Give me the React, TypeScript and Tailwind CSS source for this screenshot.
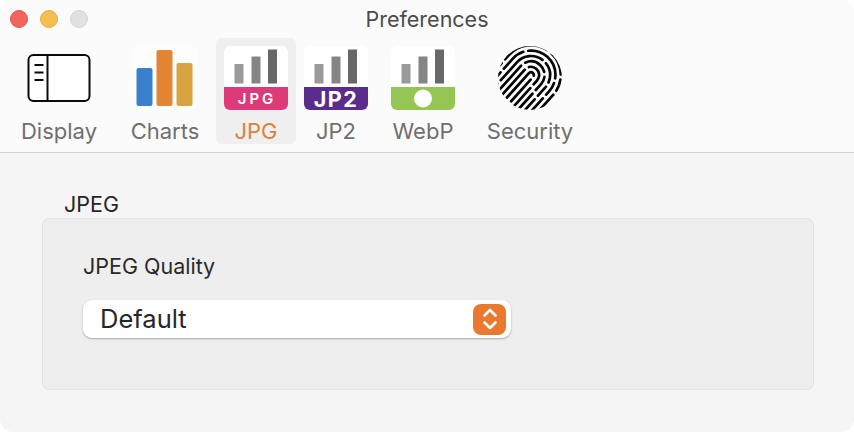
import React from "react";

const font = { fontFamily: "Inter, 'Liberation Sans', sans-serif" };

function Bars() {
  return (
    <>
      <rect x="10.5" y="18" width="9" height="19.5" fill="#9a9a9a" />
      <rect x="27.5" y="10.5" width="9" height="27" fill="#858585" />
      <rect x="44" y="3.5" width="9" height="34" fill="#686868" />
    </>
  );
}

function BarTile({ color, children }: { color: string; children?: React.ReactNode }) {
  return (
    <svg width="64" height="64" viewBox="0 0 64 64" className="block">
      <rect width="64" height="64" rx="6" fill="#ffffff" />
      <Bars />
      <path d="M0 41h64v17a6 6 0 0 1-6 6H6a6 6 0 0 1-6-6z" fill={color} />
      {children}
    </svg>
  );
}

function DisplayIcon() {
  return (
    <svg width="64" height="64" viewBox="0 0 64 64" className="block">
      <rect x="1.5" y="9" width="61" height="46" rx="5" fill="#fff" stroke="#0a0a0a" strokeWidth="2" />
      <path d="M20.5 9v46M7.5 19h9M7.5 26.5h9M7.5 34h9" stroke="#0a0a0a" strokeWidth="2" fill="none" />
    </svg>
  );
}

function ChartsIcon() {
  return (
    <svg width="66" height="66" viewBox="0 0 66 66" className="block">
      <rect width="66" height="66" rx="8" fill="#fdfdfd" />
      <rect x="4.5" y="23" width="16" height="38" rx="2" fill="#3a80cc" />
      <rect x="24.5" y="5" width="16" height="56" rx="2" fill="#e48534" />
      <rect x="44.5" y="18" width="16" height="43" rx="2" fill="#d9a33f" />
    </svg>
  );
}

function Fingerprint() {
  const radii = [
    { r: 2.8, d: "40 5" },
    { r: 8.2, d: "38 5 26 5" },
    { r: 13.6, d: "44 5 24 5 16 5" },
    { r: 19, d: "20 5 52 5 20 5 12 5" },
    { r: 24.4, d: "36 5 26 5 44 5 14 5" },
    { r: 29.8, d: "24 5 20 5 48 5 24 5 12 5" },
    { r: 35.2, d: "18 6 26 6 38 6 16 6" },
    { r: 40.6, d: "22 6 16 6 28 6 18 6" },
  ];
  return (
    <svg width="64" height="64" viewBox="0 0 64 64" className="block">
      <defs>
        <clipPath id="fp">
          <circle cx="32" cy="32" r="32" />
        </clipPath>
      </defs>
      <g clipPath="url(#fp)">
        <g transform="translate(33 29) rotate(42)" fill="none" stroke="#050505" strokeWidth="2.7" strokeLinecap="round">
          {radii.map(({ r, d }) => (
            <path key={r} d={`M${-r} ${r + 30}V0A${r} ${r} 0 0 1 ${r} 0V${r + 30}`} strokeDasharray={d} />
          ))}
        </g>
      </g>
    </svg>
  );
}

function Tab({
  w,
  ml,
  label,
  active,
  children,
}: {
  w: string;
  ml: string;
  label: string;
  active?: boolean;
  children: React.ReactNode;
}) {
  return (
    <div className={`${w} ${ml} flex h-[106px] flex-col items-center rounded-md ${active ? "bg-[#efefef]" : ""}`}>
      <div className="flex h-[72px] items-center pt-2">{children}</div>
      <div className={`mt-[9px] text-[22px] leading-[25px] ${active ? "text-[#dc8238]" : "text-[#6f6f6f]"}`}>{label}</div>
    </div>
  );
}

export default function App() {
  return (
    <div style={font} className="flex h-[432px] w-[854px] flex-col overflow-hidden rounded-[13px] bg-[#f5f5f5]">
      <div className="flex h-[38px] items-center bg-[#fbfbfb]">
        <div className="flex flex-1 items-center gap-[12px] pl-[10px]">
          <div className="h-[18px] w-[18px] rounded-full border border-[#e0574c] bg-[#f0665c]" />
          <div className="h-[18px] w-[18px] rounded-full border border-[#e8ab43] bg-[#f6bd4f]" />
          <div className="h-[18px] w-[18px] rounded-full border border-[#d2d2d2] bg-[#e1e1e1]" />
        </div>
        <div className="text-[21.5px] leading-[24px] text-[#4b4b4b]">Preferences</div>
        <div className="flex-1 pr-[10px]" />
      </div>

      <div className="flex h-[115px] border-b border-[#d4d4d4] bg-[#fbfbfb]">
        <Tab w="w-[94px]" ml="ml-[12px]" label="Display"><DisplayIcon /></Tab>
        <Tab w="w-[82px]" ml="ml-[18px]" label="Charts"><ChartsIcon /></Tab>
        <Tab w="w-[80px]" ml="ml-[10px]" label="JPG" active>
          <BarTile color="#dd3a7a">
            <text x="33" y="58" textAnchor="middle" fill="#fff" fontSize="15" fontWeight="600" letterSpacing="3">JPG</text>
          </BarTile>
        </Tab>
        <Tab w="w-[80px]" ml="ml-0" label="JP2">
          <BarTile color="#5a2d8c">
            <text x="32" y="60.5" textAnchor="middle" fill="#fff" fontSize="21.5" fontWeight="700" letterSpacing="1.5">JP2</text>
          </BarTile>
        </Tab>
        <Tab w="w-[94px]" ml="ml-0" label="WebP">
          <BarTile color="#95c653">
            <circle cx="32" cy="52.5" r="9" fill="#ffffff" />
          </BarTile>
        </Tab>
        <Tab w="w-[120px]" ml="ml-0" label="Security"><Fingerprint /></Tab>
      </div>

      <div className="flex flex-1 flex-col px-[42px] pt-[38px]">
        <div className="pl-[22px] text-[21.5px] leading-[26px] text-[#262626]">JPEG</div>
        <div className="mt-[1px] h-[172px] w-[772px] rounded-[7px] border border-[#e3e3e3] bg-[#eeeeee] pl-[40px] pt-[34px]">
          <div className="text-[21.5px] leading-[26px] text-[#2a2a2a]">JPEG Quality</div>
          <div className="mt-[21px] flex h-[38px] w-[428px] items-center justify-between rounded-[9px] bg-white pl-[17px] pr-[5px] shadow-[0_1px_2px_rgba(0,0,0,0.3)]">
            <span className="text-[25.5px] leading-[30px] text-[#262626]">Default</span>
            <div className="flex h-[31px] w-[33px] items-center justify-center rounded-[8px] bg-[#e8792f]">
              <svg width="18" height="26" viewBox="0 0 18 26" fill="none" stroke="#ffffff" strokeWidth="2.6" strokeLinecap="round" strokeLinejoin="round">
                <path d="M3.5 9.5 9 4l5.5 5.5M3.5 16.5 9 22l5.5-5.5" />
              </svg>
            </div>
          </div>
        </div>
      </div>
    </div>
  );
}
